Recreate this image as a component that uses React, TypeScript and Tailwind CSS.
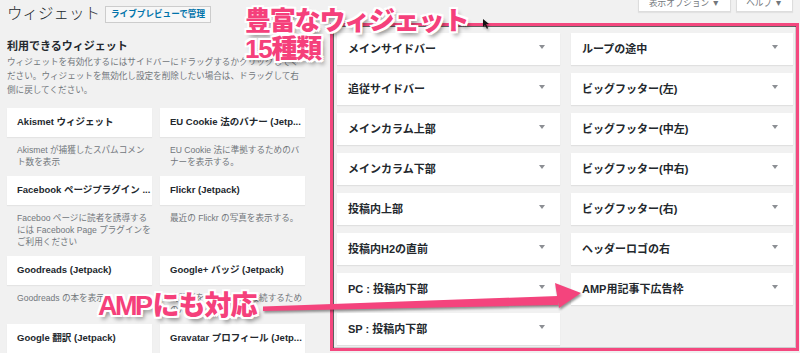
const font = '"Liberation Sans", "Noto Sans CJK JP", sans-serif';

type Avail = { title: string; desc: string[] };

const available: Avail[] = [
  { title: "Akismet ウィジェット", desc: ["Akismet が捕獲したスパムコメン", "ト数を表示"] },
  { title: "EU Cookie 法のバナー (Jetp...", desc: ["EU Cookie 法に準拠するためのバ", "ナーを表示する。"] },
  { title: "Facebook ページプラグイン ...", desc: ["Faceboo ページに読者を誘導する", "には Facebook Page プラグインを", "ご利用ください"] },
  { title: "Flickr (Jetpack)", desc: ["最近の Flickr の写真を表示する。"] },
  { title: "Goodreads (Jetpack)", desc: ["Goodreads の本を表示"] },
  { title: "Google+ バッジ (Jetpack)", desc: ["訪問者を Google+ に接続するため", "のバッジを表示する"] },
  { title: "Google 翻訳 (Jetpack)", desc: ["サイトを翻訳する"] },
  { title: "Gravatar プロフィール (Jetp...", desc: ["Gravatar プロフィールを表示"] },
];

const areas = [
  "メインサイドバー",
  "ループの途中",
  "追従サイドバー",
  "ビッグフッター(左)",
  "メインカラム上部",
  "ビッグフッター(中左)",
  "メインカラム下部",
  "ビッグフッター(中右)",
  "投稿内上部",
  "ビッグフッター(右)",
  "投稿内H2の直前",
  "ヘッダーロゴの右",
  "PC : 投稿内下部",
  "AMP用記事下広告枠",
  "SP : 投稿内下部",
];

const outline =
  "[text-shadow:2px_0_0_#fff,-2px_0_0_#fff,0_2px_0_#fff,0_-2px_0_#fff,2px_2px_0_#fff,-2px_-2px_0_#fff,2px_-2px_0_#fff,-2px_2px_0_#fff,3px_4px_4px_rgba(0,0,0,0.45)]";

export default function App() {
  return (
    <div
      className="relative w-[800px] h-[353px] overflow-hidden bg-[#f1f1f1] text-[#23282d]"
      style={{ fontFamily: font }}
    >
      {/* header */}
      <div className="flex items-start h-[33px]">
        <div className="flex items-start pl-[7px] pt-[4px]">
          <h1 className="text-[15.5px] leading-[20px] font-light">ウィジェット</h1>
          <span className="ml-[5px] mt-[2px] h-[17px] px-[5px] border border-[#ccc] bg-[#f7f7f7] text-[8.6px] leading-[15px] font-semibold text-[#0073aa]">
            ライブプレビューで管理
          </span>
        </div>
        <div className="ml-auto mr-[7px] -mt-[8px] flex gap-[5px]">
          <span className="w-[93px] h-[20px] bg-white border border-[#ddd] text-center text-[8.6px] leading-[20px] text-[#72777c] shadow-[0_1px_1px_rgba(0,0,0,0.06)]">
            表示オプション ▼
          </span>
          <span className="w-[57px] h-[20px] bg-white border border-[#ddd] text-center text-[8.6px] leading-[20px] text-[#72777c] shadow-[0_1px_1px_rgba(0,0,0,0.06)]">
            ヘルプ ▼
          </span>
        </div>
      </div>

      {/* body */}
      <div className="flex">
        <div className="ml-[7px] w-[298px]">
          <h2 className="mt-[5px] text-[11px] leading-[16px] font-bold">利用できるウィジェット</h2>
          <p className="mt-[1px] text-[8.6px] leading-[14px] text-[#72777c]">
            ウィジェットを有効化するにはサイドバーにドラッグするかクリックしてく
            <br />
            ださい。ウィジェットを無効化し設定を削除したい場合は、ドラッグして右
            <br />
            側に戻してください。
          </p>
          <div className="mt-[11px] grid grid-cols-[145px_145px] gap-x-[8px]">
            {available.map((w) => (
              <div key={w.title}>
                <div className="h-[29px] bg-white px-[10px] flex items-center text-[9.5px] font-bold whitespace-nowrap overflow-hidden shadow-[0_1px_1px_rgba(0,0,0,0.05)]">
                  {w.title}
                </div>
                <p className="pt-[7px] pb-[8px] px-[10px] text-[8.6px] leading-[12px] text-[#72777c]">
                  {w.desc.map((l, i) => (
                    <span key={i} className="block whitespace-nowrap">
                      {l}
                    </span>
                  ))}
                </p>
              </div>
            ))}
          </div>
        </div>

        <div className="ml-[32px] grid grid-cols-[223px_222px] gap-x-[11px] gap-y-[8px] auto-rows-[32px]">
          {areas.map((a) => (
            <div
              key={a}
              className="bg-white flex items-center justify-between pl-[11px] pr-[15px] shadow-[0_1px_1px_rgba(0,0,0,0.07)]"
            >
              <span className="text-[11px] font-bold whitespace-nowrap">{a}</span>
              <span className="w-0 h-0 -mt-[5px] border-l-[3px] border-r-[3px] border-t-[4px] border-l-transparent border-r-transparent border-t-[#8c8f94]" />
            </div>
          ))}
        </div>
      </div>

      {/* annotation overlays */}
      <div className="absolute left-[330px] top-[23px] w-[469px] h-[328px] border-[3px] border-[#f4487f] shadow-[inset_1px_1px_0_rgba(0,0,0,0.6),inset_-1px_-1px_0_rgba(0,0,0,0.15)]" />

      <svg
        className="absolute left-0 top-0 pointer-events-none [filter:drop-shadow(1px_2px_1px_rgba(0,0,0,0.4))]"
        width="800"
        height="353"
        viewBox="0 0 800 353"
      >
        <polygon points="263,306.5 558,296 558,305 263,311" fill="#f4447d" />
        <polygon points="555,283 581,293 559,308" fill="#f4447d" />
        <polygon points="483,19 483,27 485,25 487,29 488,28 486,24 489,24" fill="#111" />
      </svg>

      <div
        className={`absolute left-[245px] top-[7px] text-[26px] leading-[28px] font-black tracking-[-1.2px] text-[#f5407b] ${outline}`}
      >
        豊富なウィジェット
        <br />
        15種類
      </div>
      <div
        className={`absolute left-[98px] top-[291px] text-[27px] leading-[30px] font-black tracking-[-1px] text-[#f5407b] ${outline}`}
      >
        <span className="tracking-[-2.5px]">AMP</span>
        <span className="ml-[2px]">にも対応</span>
      </div>
    </div>
  );
}
